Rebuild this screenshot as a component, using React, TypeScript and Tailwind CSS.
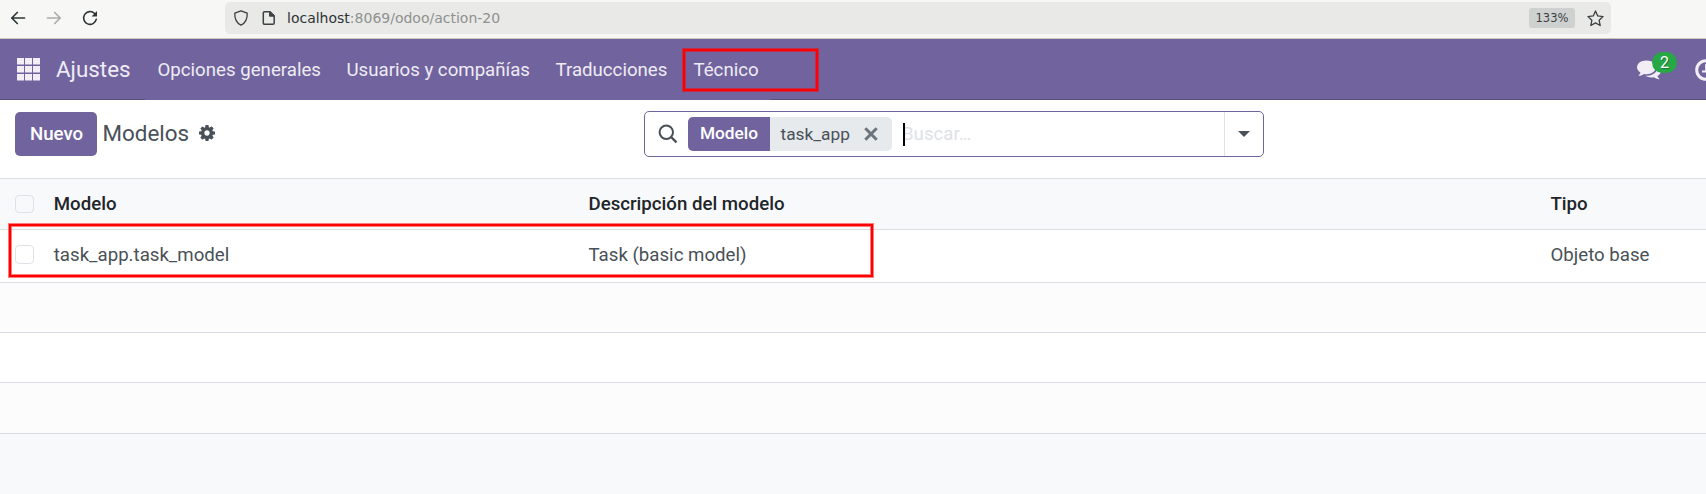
import type { ReactNode } from "react";

function GearIcon() {
  return (
    <svg className="size-4" viewBox="0 128 1536 1536" fill="#495057">
      <path d="M1024 896q0-106-75-181t-181-75-181 75-75 181 75 181 181 75 181-75 75-181zm512-109v222q0 12-8 23t-20 13l-185 28q-19 54-39 91 35 50 107 138 10 12 10 25t-9 23q-27 37-99 108t-94 71q-12 0-26-9l-138-108q-44 23-91 38-16 136-29 186-7 28-36 28h-222q-14 0-24.5-8.5t-11.5-21.5l-28-184q-49-16-90-37l-141 107q-10 9-25 9-14 0-25-11-126-114-165-168-7-10-7-23 0-12 8-23 15-21 51-66.5t54-70.5q-27-50-41-99l-183-27q-13-2-21-12.5t-8-23.5v-222q0-12 8-23t19-13l186-28q14-46 39-92-40-57-107-138-10-12-10-24 0-10 9-23 26-36 98.5-107.5t94.5-71.5q13 0 26 10l138 107q44-23 91-38 16-136 29-186 7-28 36-28h222q14 0 24.5 8.5t11.5 21.500l28 184q49 16 90 37l142-107q9-9 24-9 13 0 25 10 129 119 165 170 7 8 7 22 0 12-8 23-15 21-51 66.5t-54 70.5q26 50 41 98l183 28q13 2 21 12.5t8 23.5z" />
    </svg>
  );
}

function CommentsIcon() {
  return (
    <svg className="size-6" viewBox="0 0 1792 1792" fill="#f1eff5">
      <path d="M1408 768q0 139-94 257t-256.5 186.5-353.5 68.5q-86 0-176-16-124 88-278 128-36 9-86 16h-3q-11 0-20.5-8t-11.5-21q-1-3-1-6.5t.5-6.5 2-6l2.500-5 3.5-5.5 4-5 4.5-5 4-4.500q5-6 23-25t26-29.5 22.5-29 25-38.5 20.5-44q-124-72-195-177t-71-224q0-139 94-257t256.5-186.5 353.5-68.5 353.5 68.5 256.5 186.5 94 257zm384 256q0 120-71 224.5t-195 176.5q10 24 20.5 44t25 38.5 22.5 29 26 29.5 23 25q1 1 4 4.500t4.500 5 4 5 3.500 5.500l2.500 5 2 6 .5 6.500-1 6.500q-3 14-13 22t-22 7q-50-7-86-16-154-40-278-128-90 16-176 16-271 0-472-132 58 4 88 4 161 0 309-45t264-129q125-92 192-212t67-254q0-77-23-152 129 71 204 178t75 230z" />
    </svg>
  );
}

function BrowserBar() {
  return (
    <div className="flex h-[39px] items-start border-b border-[#c9c9b8] bg-[#f7f7f5] pt-[2px]">
      <div className="flex h-8 w-[225px] items-center gap-[20px] pl-[10px]">
        <svg className="size-4" viewBox="0 0 16 16" fill="none" stroke="#2e3436" strokeWidth="1.7" strokeLinecap="round" strokeLinejoin="round">
          <path d="M14.500 8H1.800M7.300 2.500L1.800 8l5.500 5.500" />
        </svg>
        <svg className="size-4" viewBox="0 0 16 16" fill="none" stroke="#abacab" strokeWidth="1.7" strokeLinecap="round" strokeLinejoin="round">
          <path d="M1.500 8h12.700M8.700 2.500L14.200 8l-5.500 5.500" />
        </svg>
        <svg className="size-4" viewBox="0 0 16 16" fill="none" stroke="#2e3436" strokeWidth="1.6" strokeLinecap="round">
          <path d="M14.300 9.200A6.400 6.400 0 1 1 12.600 3.500" />
          <path d="M15 1v5.400H9.600z" fill="#2e3436" stroke="none" />
        </svg>
      </div>
      <div className="flex h-8 w-[1386px] items-center rounded-[5px] bg-[#e9e9e7] pl-[8px] pr-[7px]">
        <svg className="size-4" viewBox="0 0 16 16" fill="none" stroke="#3c4143" strokeWidth="1.3" strokeLinejoin="round">
          <path d="M8 .900L14.200 3.200C14.500 9 12.300 13 8 15.200 3.700 13 1.500 9 1.800 3.200z" />
        </svg>
        <svg className="ml-[12px] size-4" viewBox="0 0 16 16" fill="none" stroke="#3c4143" strokeWidth="1.5" strokeLinejoin="round">
          <path d="M3.500 1.700h5.300l4.400 4.400v7a1.200 1.200 0 0 1-1.200 1.200H3.500a1.200 1.200 0 0 1-1.200-1.200V2.900a1.200 1.200 0 0 1 1.200-1.200z" />
          <path d="M8.800 1.700v4.400h4.400z" fill="#3c4143" />
        </svg>
        <span className="ml-[10px] font-['DejaVu_Sans',sans-serif] text-[14px] leading-none text-[#8f9190]">
          <span className="text-[#2e3436]">localhost</span>:8069/odoo/action-20
        </span>
        <span className="ml-auto flex h-5 w-[46px] items-center justify-center rounded-[3px] bg-[#cfd1d0] pt-px font-['DejaVu_Sans',sans-serif] text-[11.5px] leading-none text-[#3a3f41]">
          133%
        </span>
        <svg className="ml-[12px] size-[17px]" viewBox="0 0 16 16" fill="none" stroke="#3c4143" strokeWidth="1.25" strokeLinejoin="round">
          <path d="M8 1l2.100 4.600 5 .600-3.700 3.400 1 5L8 12.100l-4.400 2.500 1-5L.900 6.200l5-.600z" />
        </svg>
      </div>
    </div>
  );
}

function NavBar() {
  return (
    <nav className="flex h-[61px] items-center bg-[#71639e] text-[18.67px] text-[#eeecf3]">
      <div className="flex h-full w-[145px] shrink-0 items-center border-b border-[#5a4f7f] pl-[17px]">
        <svg className="size-[23px]" viewBox="0 0 23 23" fill="#f1eff5">
          {[0, 8, 16].map((y) => [0, 8, 16].map((x) => <rect key={`${x}-${y}`} x={x} y={y} width="7" height="6.500" />))}
        </svg>
        <span className="ml-[16px] text-[22.4px] leading-none">Ajustes</span>
      </div>
      <div className="flex w-[626px] shrink-0 items-center pl-[12.5px]">
        <span className="w-[189px] shrink-0">Opciones generales</span>
        <span className="w-[209px] shrink-0">Usuarios y compañías</span>
        <span className="w-[126.5px] shrink-0">Traducciones</span>
        <span className="relative w-[137px] shrink-0 pl-[11.5px]">
          Técnico
          <span className="absolute -top-[8px] left-0 h-[44px] w-[137px] border-4 border-[#f00]/50">
            <span className="absolute -inset-[3px] border-2 border-[#f00]" />
          </span>
        </span>
      </div>
      <div className="flex h-full flex-1 items-center justify-end overflow-hidden border-b border-[#5a4f7f]">
        <span className="relative mr-[34px] shrink-0">
          <CommentsIcon />
          <span className="absolute -top-[5px] left-[15px] flex h-[21px] w-[25px] items-center justify-center rounded-full bg-[#28a745] text-[16px] leading-none text-white [text-shadow:1px_1px_0_rgba(0,0,0,0.3)]">
            2
          </span>
        </span>
        <span className="mt-px w-[11px] shrink-0 overflow-hidden">
          <svg className="h-[22px] w-[22px]" viewBox="0 0 22 22" fill="none" stroke="#f1eff5" strokeWidth="3">
            <circle cx="11" cy="11" r="9.300" />
            <path d="M11 5v7.500H7" strokeWidth="1.800" />
          </svg>
        </span>
      </div>
    </nav>
  );
}

function ControlPanel() {
  return (
    <div className="flex h-[78px] items-start bg-white pt-[11px] pl-[15px]">
      <button className="mt-px h-[44px] w-[82px] rounded-[5px] bg-[#71639e] pl-px text-[18.67px] font-medium text-white">Nuevo</button>
      <div className="flex h-[44px] w-[547px] items-center gap-[9.5px] pl-[5.5px]">
        <span className="mt-[2px] text-[22.4px] text-[#495057]">Modelos</span>
        <GearIcon />
      </div>
      <div className="flex h-[46px] w-[620px] items-center rounded-[5px] border border-[#71639e] pl-[13px]">
        <svg className="-mt-px size-5" viewBox="0 0 20 20" fill="none" stroke="#495057" strokeWidth="2">
          <circle cx="8.300" cy="8.300" r="6.700" />
          <path d="M13.100 13l5.400 5.400" strokeWidth="2.400" />
        </svg>
        <div className="ml-[10px] flex h-[34px] w-[204px] items-center overflow-hidden rounded-[5px] bg-[#e7eaed] text-[17.300px]">
          <span className="flex h-full w-[82px] items-center justify-center bg-[#71639e] font-medium text-white">Modelo</span>
          <span className="w-[94px] pt-[2px] pl-[10.5px] text-[#495057]">task_app</span>
          <svg className="h-[14px] w-[14px]" viewBox="0 0 14 14" stroke="#6c757d" strokeWidth="3">
            <path d="M1.300 1.300l11.400 11.400M12.700 1.300L1.300 12.700" />
          </svg>
        </div>
        <div className="ml-[11px] flex flex-1 items-center">
          <span className="z-10 h-[23px] w-[2px] bg-black" />
          <span className="-ml-[3px] text-[18.67px] text-[#dee2e6]">Buscar…</span>
        </div>
        <div className="flex h-full w-[39px] items-center justify-center border-l border-[#dee2e6]">
          <svg className="h-[6px] w-[12px]" viewBox="0 0 12 6" fill="#495057">
            <path d="M0 0h12L6 6z" />
          </svg>
        </div>
      </div>
    </div>
  );
}

function CheckBox() {
  return <span className="block h-[19px] w-[19px] rounded-[4px] border border-[#dee2e6]" />;
}

function HeaderCheckBox() {
  return <span className="-mt-px block h-[18px] w-[19px] rounded-[4px] border border-[#dee2e6]" />;
}

function Row({ className, cells }: { className: string; cells: ReactNode[] }) {
  return (
    <div className={`grid grid-cols-[38.75px_534.75px_962px_1fr] items-center border-b border-[#dadde3] pl-[15px] text-[18.67px] ${className}`}>
      {cells.map((cell, i) => (
        <div key={i}>{cell}</div>
      ))}
    </div>
  );
}

export default function App() {
  return (
    <div className="h-[494px] w-[1706px] overflow-hidden bg-[#f8f9fb] font-[Roboto,sans-serif]">
      <BrowserBar />
      <NavBar />
      <ControlPanel />
      <div className="relative border-t border-[#dadde3]">
        <Row className="h-[51px] bg-[#f8f9fb] font-medium text-[#212529]" cells={[<HeaderCheckBox />, "Modelo", "Descripción del modelo", "Tipo"]} />
        <Row className="h-[53px] bg-white pb-[3px] text-[#495057]" cells={[<CheckBox />, "task_app.task_model", "Task (basic model)", "Objeto base"]} />
        <Row className="h-[50px] bg-[#fcfcfc]" cells={[]} />
        <Row className="h-[50px] bg-white" cells={[]} />
        <Row className="h-[51px] bg-[#fcfcfc]" cells={[]} />
        <div className="absolute top-[44px] left-[8px] h-[55px] w-[866px] border-4 border-[#f00]/50">
          <div className="absolute -inset-[3px] border-2 border-[#f00]" />
        </div>
      </div>
    </div>
  );
}
